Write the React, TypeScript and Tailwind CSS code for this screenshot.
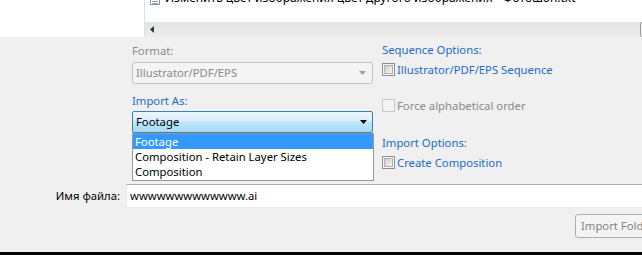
import React from "react";

const font = { fontFamily: '"Noto Sans", "Open Sans", sans-serif' };

function Checkbox({ disabled = false }: { disabled?: boolean }) {
  return (
    <div
      className={
        disabled
          ? "w-[13px] h-[13px] border border-[#c9c9c9] bg-[#f4f4f4] shrink-0"
          : "w-[13px] h-[13px] border border-[#8e8f8f] bg-[#f4f4f4] shrink-0 p-[1px]"
      }
    >
      {!disabled && (
        <div className="w-full h-full border border-[#b0b0b0] bg-gradient-to-br from-[#cfcfcf] to-[#f6f6f6]" />
      )}
    </div>
  );
}

export default function App() {
  return (
    <div
      className="w-[642px] h-[255px] bg-[#f0f0f0] flex flex-col overflow-hidden text-[11.3px] relative"
      style={font}
    >
      {/* top file browser remnant */}
      <div className="h-[37px] flex shrink-0">
        <div className="w-[145px] bg-white border-r border-[#d5e1ee]" />
        <div className="flex-1 flex flex-col">
          <div className="h-[22px] bg-white flex items-start pl-[5px] overflow-hidden">
            <div className="flex items-center gap-[5px] mt-[-10px]">
              <svg width="10" height="14" viewBox="0 0 10 14">
                <rect x="0.5" y="0.5" width="9" height="13" fill="#fff" stroke="#8a96a8" />
                <line x1="2" y1="8.5" x2="8" y2="8.5" stroke="#9aa4b4" />
                <line x1="2" y1="10.5" x2="8" y2="10.5" stroke="#9aa4b4" />
                <line x1="2" y1="12.5" x2="8" y2="12.5" stroke="#9aa4b4" />
              </svg>
              <span className="text-black leading-[15px] whitespace-nowrap text-[12px]">
                Изменить цвет изображения цвет другого изображения - Фотошоп.txt
              </span>
            </div>
          </div>
          <div className="h-[15px] bg-gradient-to-b from-[#e3e3e3] to-[#ededed] flex items-center pl-[5px] relative">
            <svg width="4" height="7" viewBox="0 0 4 7">
              <polygon points="4,0 0,3.5 4,7" fill="#333" />
            </svg>
            <div className="absolute right-[-10px] top-0 h-[15px] w-[12px] border border-[#9a9a9a] rounded-[2px] bg-[#f2f2f2]" />
          </div>
        </div>
      </div>

      {/* options area */}
      <div className="h-[147px] flex pl-[132px] shrink-0">
        <div className="w-[241px] flex flex-col relative">
          <div className="mt-[6px] leading-[15px] text-[#8d8d8d]">Format:</div>
          <div className="mt-[4px] h-[22px] border border-[#c3c3c3] rounded-[3px] bg-[#f4f4f4] flex items-center justify-between pl-[3px] pr-[6px] text-[#8a8a8a]">
            <span>Illustrator/PDF/EPS</span>
            <svg width="7" height="4" viewBox="0 0 7 4">
              <polygon points="0,0 7,0 3.5,4" fill="#a0a0a0" />
            </svg>
          </div>
          <div className="mt-[9px] leading-[15px] text-[#1b6cc8]">Import As:</div>
          <div className="mt-[3px] h-[22px] border border-[#3c7fb1] rounded-[2px] flex items-center justify-between pl-[3px] pr-[5px] text-black bg-[linear-gradient(to_bottom,#eaf6fd_0%,#d9f0fc_45%,#bee6fd_50%,#a7d9f5_100%)]">
            <span>Footage</span>
            <svg width="7" height="4" viewBox="0 0 7 4">
              <polygon points="0,0 7,0 3.5,4" fill="#000" />
            </svg>
          </div>
          {/* dropdown list (popup) */}
          <div className="absolute left-0 top-[96px] w-[242px] h-[48px] border border-[#979797] bg-white flex flex-col z-10">
            <div className="h-[15px] bg-[#3399ff] text-white leading-[15px] pl-[2px]">Footage</div>
            <div className="h-[15px] text-black leading-[15px] pl-[2px]">Composition - Retain Layer Sizes</div>
            <div className="h-[15px] text-black leading-[15px] pl-[2px]">Composition</div>
          </div>
        </div>
        <div className="ml-[9px] flex flex-col">
          <div className="mt-[5px] leading-[15px] text-[#1b6cc8]">Sequence Options:</div>
          <div className="mt-[5px] flex items-center gap-[2px] h-[15px]">
            <Checkbox />
            <span className="text-[#1b6cc8] leading-[15px]">Illustrator/PDF/EPS Sequence</span>
          </div>
          <div className="mt-[21px] flex items-center gap-[2px] h-[15px]">
            <Checkbox disabled />
            <span className="text-[#8a8a8a] leading-[15px]">Force alphabetical order</span>
          </div>
          <div className="mt-[22px] leading-[15px] text-[#1b6cc8]">Import Options:</div>
          <div className="mt-[5px] flex items-center gap-[2px] h-[15px]">
            <Checkbox />
            <span className="text-[#1b6cc8] leading-[15px]">Create Composition</span>
          </div>
        </div>
      </div>

      {/* file name row */}
      <div className="h-[24px] flex items-center shrink-0">
        <div className="w-[120px] text-right text-black">Имя файла:</div>
        <div className="ml-[6px] flex-1 h-[24px] bg-white border border-[#e3e9ef] border-t-[#abadb3] flex items-center pl-[3px] mr-[-4px] text-black">
          wwwwwwwwwwwww.ai
        </div>
      </div>

      {/* button row */}
      <div className="flex justify-end mt-[6px] shrink-0">
        <div className="w-[90px] mr-[-23px] h-[24px] border border-[#adadad] rounded-[3px] bg-[#f4f4f4] flex items-center pl-[5px] text-[#838383]">
          Import Folder
        </div>
      </div>

      <div className="flex-1" />
      <div className="h-[3px] bg-black shrink-0" />
    </div>
  );
}
